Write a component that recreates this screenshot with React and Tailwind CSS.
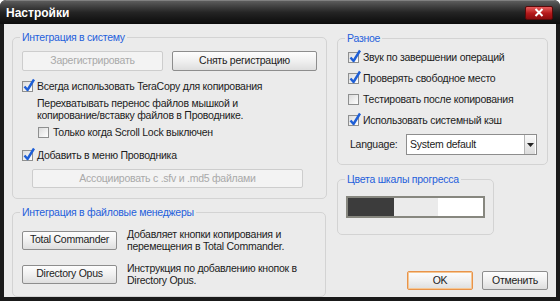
import React from 'react';

const font = { fontFamily: '"Liberation Sans", Arial, sans-serif' };

const Check = ({ checked, label, className = '' }) => (
  <div className={`flex items-center h-[13px] ${className}`}>
    <span className="relative w-[11px] h-[11px] border border-[#8e8f8f] bg-gradient-to-br from-[#dcdcdc] to-white shrink-0">
      {checked && (
        <svg className="absolute -left-[1px] -top-[4px]" width="15" height="15" viewBox="0 0 15 15">
          <path d="M2.5 8.5 L5.5 12 L12 1.5" fill="none" stroke="#1f5fd6" strokeWidth="2.4" strokeLinejoin="round" />
        </svg>
      )}
    </span>
    <span className="ml-[4px] whitespace-nowrap">{label}</span>
  </div>
);

const Button = ({ children, disabled, className = '' }) => (
  <div
    className={`flex items-center justify-center rounded-[2px] border ${
      disabled
        ? 'border-[#cdcdcd] bg-[#f3f3f3] text-[#a9a9a9]'
        : 'border-[#8d8d8d] bg-gradient-to-b from-[#fdfdfd] via-[#f0f0f0] to-[#dedede] text-[#1c1c1c]'
    } ${className}`}
  >
    {children}
  </div>
);

const Group = ({ title, className = '', legendClass = '', children }) => (
  <fieldset className={`border border-[#d3d3d3] rounded-[5px] ${className}`}>
    <legend className={`px-[2px] text-[#1f5fdb] leading-[13px] ${legendClass}`}>{title}</legend>
    {children}
  </fieldset>
);

export default function App() {
  return (
    <div className="w-[560px] h-[301px] bg-[#1a1a1a] rounded-t-[6px] flex flex-col text-[10.5px] tracking-[-0.25px] text-[#1c1c1c] overflow-hidden" style={font}>
      <div className="h-[25px] flex items-center justify-between pl-[6px] pr-[7px] bg-gradient-to-b from-[#5c5c5c] via-[#242424] to-[#0c0c0c] border-t border-[#808080] rounded-t-[6px]">
        <span className="text-white font-bold text-[12px] tracking-normal">Настройки</span>
        <div className="w-[28px] h-[14px] rounded-[2px] border border-[#5a0a0a] bg-gradient-to-b from-[#e5595a] via-[#b81a1c] to-[#8c0c0e] flex items-center justify-center">
          <svg width="10" height="9" viewBox="0 0 10 9">
            <path d="M1.5 1 L8.5 8 M8.5 1 L1.5 8" stroke="white" strokeWidth="2" />
          </svg>
        </div>
      </div>
      <div className="flex-1 mx-[4px] mb-[4px] bg-[#ebebeb] flex gap-[11px] px-[8px]">
        <div className="w-[314px] flex flex-col">
          <Group title="Интеграция в систему" className="mt-[7px] px-[9px] pb-[10px]" legendClass="-ml-[2px]">
            <div className="mt-[7px] flex gap-[9px] h-[20px]">
              <Button disabled className="w-[141px]">Зарегистрировать</Button>
              <Button className="w-[145px]">Снять регистрацию</Button>
            </div>
            <Check checked className="mt-[9px]" label="Всегда использовать TeraCopy для копирования" />
            <div className="mt-[4px] ml-[15px] leading-[12px]">
              Перехватывать перенос файлов мышкой и<br />копирование/вставку файлов в Проводнике.
            </div>
            <Check className="mt-[5px] ml-[16px]" label="Только когда Scroll Lock выключен" />
            <Check checked className="mt-[10px]" label="Добавить в меню Проводника" />
            <Button disabled className="mt-[7px] ml-[10px] w-[271px] h-[19px]">Ассоциировать с .sfv и .md5 файлами</Button>
          </Group>
          <Group title="Интеграция в файловые менеджеры" className="mt-[7px] px-[9px] pb-[10px]" legendClass="-ml-[2px]">
            <div className="mt-[9px] flex items-center">
              <Button className="w-[95px] h-[19px]">Total Commander</Button>
              <div className="ml-[10px] leading-[12px]">Добавляет кнопки копирования и<br />перемещения в Total Commander.</div>
            </div>
            <div className="mt-[10px] flex items-center">
              <Button className="w-[95px] h-[19px]">Directory Opus</Button>
              <div className="ml-[10px] leading-[12px]">Инструкция по добавлению кнопок в<br />Directory Opus.</div>
            </div>
          </Group>
        </div>
        <div className="w-[211px] flex flex-col">
          <Group title="Разное" className="mt-[8px] px-[10px] pb-[9px]" legendClass="-ml-[3px]">
            <div className="mt-[2px] flex flex-col">
              <div className="h-[21px] flex items-center"><Check checked label="Звук по завершении операций" /></div>
              <div className="h-[21px] flex items-center"><Check checked label="Проверять свободное место" /></div>
              <div className="h-[21px] flex items-center"><Check label="Тестировать после копирования" /></div>
              <div className="h-[21px] flex items-center"><Check checked label="Использовать системный кэш" /></div>
            </div>
            <div className="mt-[3px] flex items-center h-[21px]">
              <span className="ml-[2px] w-[56px]">Language:</span>
              <div className="flex-1 h-[21px] border border-[#8d8d8d] bg-white flex items-center">
                <span className="flex-1 pl-[3px]">System default</span>
                <div className="w-[11px] h-[19px] mr-[1px] bg-gradient-to-b from-[#fafafa] to-[#dcdcdc] border-l border-[#b5b5b5] flex items-center justify-center">
                  <svg width="7" height="4" viewBox="0 0 7 4"><path d="M0 0 H7 L3.5 4 Z" fill="#222" /></svg>
                </div>
              </div>
            </div>
          </Group>
          <Group title="Цвета шкалы прогресса" className="mt-[8px] w-[157px] pl-[8px] pb-[16px]" legendClass="-ml-[1px]">
            <div className="mt-[10px] w-[139px] h-[22px] border-2 border-[#87877f] flex">
              <div className="w-[46px] bg-[#3c3c3c]" />
              <div className="w-[44px] bg-[#ebebeb]" />
              <div className="flex-1 bg-white" />
            </div>
          </Group>
          <div className="mt-auto mb-[7px] flex justify-end gap-[9px]">
            <Button className="w-[66px] h-[19px] !border-[#e8934a] ring-1 ring-[#f6c793] ring-inset">OK</Button>
            <Button className="w-[66px] h-[19px]">Отменить</Button>
          </div>
        </div>
      </div>
    </div>
  );
}
